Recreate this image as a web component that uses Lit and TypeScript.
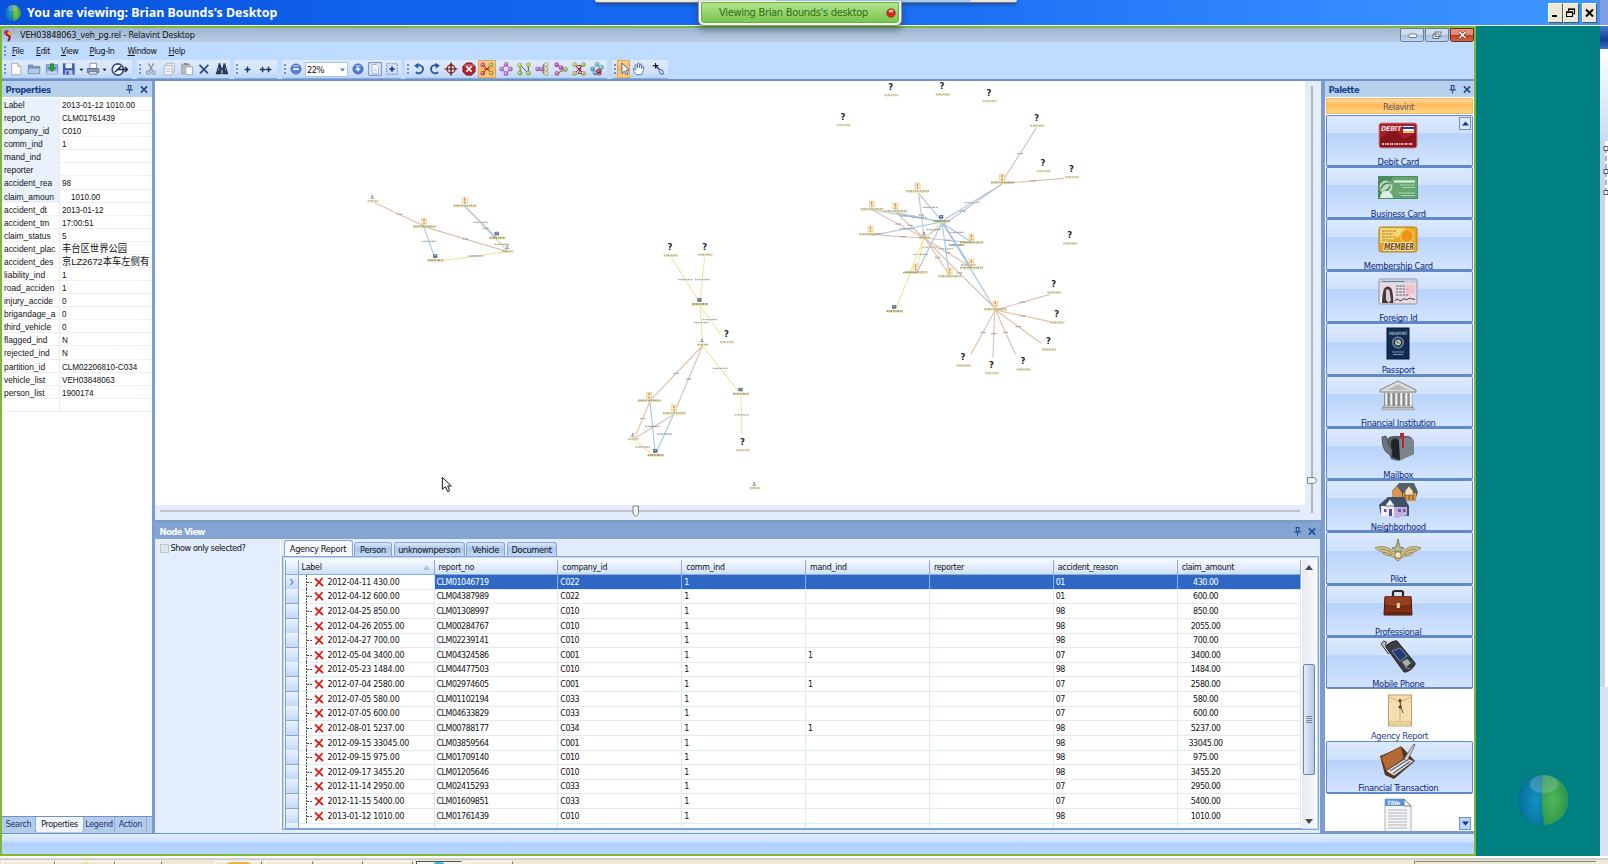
import { LitElement, html, svg, css } from "lit";
import { customElement } from "lit/decorators.js";
import { classMap } from "lit/directives/class-map.js";
import { styleMap } from "lit/directives/style-map.js";

const properties: [string, string, boolean?][] = [
  ["Label", "2013-01-12 1010.00"],
  ["report_no", "CLM01761439"],
  ["company_id", "C010"],
  ["comm_ind", "1"],
  ["mand_ind", ""],
  ["reporter", ""],
  ["accident_rea", "98"],
  ["claim_amoun", "\u00a0\u00a0\u00a0\u00a01010.00"],
  ["accident_dt", "2013-01-12"],
  ["accident_tm", "17:00:51"],
  ["claim_status", "5"],
  ["accident_plac", "丰台区世界公园", true],
  ["accident_des", "京LZ2672本车左侧有", true],
  ["liability_ind", "1"],
  ["road_acciden", "1"],
  ["injury_accide", "0"],
  ["brigandage_a", "0"],
  ["third_vehicle", "0"],
  ["flagged_ind", "N"],
  ["rejected_ind", "N"],
  ["partition_id", "CLM02206810-C034"],
  ["vehicle_list", "VEH03848063"],
  ["person_list", "1900174"],
  ["", ""],
];

const rows: string[][] = [
  ["2012-04-11 430.00", "CLM01046719", "C022", "1", "", "", "01", "430.00"],
  ["2012-04-12 600.00", "CLM04387989", "C022", "1", "", "", "01", "600.00"],
  ["2012-04-25 850.00", "CLM01308997", "C010", "1", "", "", "98", "850.00"],
  ["2012-04-26 2055.00", "CLM00284767", "C010", "1", "", "", "98", "2055.00"],
  ["2012-04-27 700.00", "CLM02239141", "C010", "1", "", "", "98", "700.00"],
  ["2012-05-04 3400.00", "CLM04324586", "C001", "1", "1", "", "07", "3400.00"],
  ["2012-05-23 1484.00", "CLM04477503", "C010", "1", "", "", "98", "1484.00"],
  ["2012-07-04 2580.00", "CLM02974605", "C001", "1", "1", "", "07", "2580.00"],
  ["2012-07-05 580.00", "CLM01102194", "C033", "1", "", "", "07", "580.00"],
  ["2012-07-05 600.00", "CLM04633829", "C033", "1", "", "", "07", "600.00"],
  ["2012-08-01 5237.00", "CLM00788177", "C034", "1", "1", "", "98", "5237.00"],
  ["2012-09-15 33045.00", "CLM03859564", "C001", "1", "", "", "98", "33045.00"],
  ["2012-09-15 975.00", "CLM01709140", "C010", "1", "", "", "98", "975.00"],
  ["2012-09-17 3455.20", "CLM01205646", "C010", "1", "", "", "98", "3455.20"],
  ["2012-11-14 2950.00", "CLM02415293", "C033", "1", "", "", "07", "2950.00"],
  ["2012-11-15 5400.00", "CLM01609851", "C033", "1", "", "", "07", "5400.00"],
  ["2013-01-12 1010.00", "CLM01761439", "C010", "1", "", "", "98", "1010.00"],
];

const columns = ["Label", "report_no", "company_id", "comm_ind", "mand_ind", "reporter", "accident_reason", "claim_amount"];

/* ---------- toolbar glyphs, all on a 16x16 grid ---------- */

const balls = (pts: [number, number, string][], lines = "", stroke = "#555") => svg`
  <path d=${lines} stroke=${stroke} fill="none" stroke-width="1.1"/>
  ${pts.map(([x, y, c]) => svg`<circle cx=${x} cy=${y} r="2.5" fill=${c} stroke="#5a4a5a" stroke-opacity=".55" stroke-width=".5"/><circle cx=${x - 0.6} cy=${y - 0.7} r=".9" fill="#fff" opacity=".75"/>`)}`;

const glyphs: Record<string, unknown> = {
  page: svg`<path d="M3 1.5h7l3.5 3.5v9.5H3z" fill="#fdfdfd" stroke="#9aa0a8" stroke-width=".9"/><path d="M10 1.5V5h3.5" fill="#d8dce2" stroke="#9aa0a8" stroke-width=".8"/>`,
  folder: svg`<path d="M1.500 3.500h5l1.200 1.500h6.800V13H1.500z" fill="#7d9cc4" stroke="#5b789f" stroke-width=".8"/><path d="M1 13.500 1.800 7h13l-.8 6.500z" fill="#b4cbe8" stroke="#6683ab" stroke-width=".7"/>`,
  inbox: svg`<path d="M1.5 3h13v10.5h-13z" fill="#8fabd0" stroke="#5d7ba5" stroke-width=".8"/><path d="M2 10.500h12v3H2z" fill="#c8d8ec"/><path d="M8 11 3.8 6.6h2.5V2h3.4v4.6h2.5z" fill="#27a339" stroke="#0e6b1f" stroke-width=".6"/>`,
  disk: svg`<path d="M1 1.500h13.500v13H1z" fill="#3c5fb2"/><path d="M4 1.500h7.500v5.500H4z" fill="#e9f0fb"/><path d="M3.500 9.500h8.500v5H3.500z" fill="#b9c9ea"/><path d="M5 10.500h2.500v4H5z" fill="#2e4fa5"/>`,
  drop: svg`<path d="M4.500 6.500h7L8 10.500z" fill="#111"/>`,
  printer: svg`<path d="M4.500 1.500h7.500v6H4.500z" fill="#fff" stroke="#66718f" stroke-width=".8"/><path d="M1.500 7.500h13v4.500h-13z" fill="#8d99b8" stroke="#4b5674" stroke-width=".8"/><path d="M3.500 11h9v3h-9z" fill="#dfe5f1" stroke="#4b5674" stroke-width=".7"/>`,
  clock: svg`<circle cx="6.400" cy="8" r="5.300" fill="#f3f7fe" stroke="#34497f" stroke-width="1.500"/><path d="M3.500 10.500 9.500 5M6 8h9.500M13 5.600 15.600 8 13 10.400" stroke="#16234a" stroke-width="1.300" fill="none"/>`,
  cut: svg`<path d="M5 1.500 9.800 10M11 1.500 6.200 10" stroke="#8d949d" stroke-width="1.600"/><circle cx="4.900" cy="12" r="2" fill="none" stroke="#8d949d" stroke-width="1.300"/><circle cx="11" cy="12" r="2" fill="none" stroke="#8d949d" stroke-width="1.300"/>`,
  copy: svg`<path d="M5 1.500h9v10H5z" fill="#eceff3" stroke="#a5acb5" stroke-width=".9"/><path d="M2.500 4h9v10.500h-9z" fill="#f6f7f9" stroke="#a5acb5" stroke-width=".9"/><path d="M4 7h6M4 9h6M4 11h6" stroke="#b9c0c8" stroke-width=".8"/>`,
  paste: svg`<path d="M2 2.500h9.500v11H2z" fill="#bcbfc4" stroke="#8b9097" stroke-width=".9"/><path d="M4.500 1.200h4.600v2.400H4.500z" fill="#868c94"/><path d="M6.500 5.500h8v9h-8z" fill="#f7f8fa" stroke="#8b9097" stroke-width=".8"/>`,
  del: svg`<path d="M2.800 3.200 12.400 13M13 3.200 3.400 13" stroke="#2c4889" stroke-width="2" fill="none"/>`,
  find: svg`<path d="M.8 14 3.800 3.500h3l.8 10.500zM15.200 14l-3-10.500h-3L8.400 14z" fill="#263550"/><path d="M6.500 6h3v3.500h-3z" fill="#3a4c74"/><path d="M3.800 1.500h2.800v2H3.800zM9.400 1.500h2.800v2H9.400z" fill="#47587d"/><path d="M3.500 10l1-3.500M12.500 10l-1-3.500" stroke="#8fa3c6" stroke-width="1"/>`,
  plus: svg`<path d="M8 4.400v7.200M4.400 8h7.200" stroke="#1b3468" stroke-width="1.900"/>`,
  plus2: svg`<path d="M4.400 4.600v6.800M1 8h6.800M11.800 4.600v6.800M8.400 8h6.800" stroke="#1b3468" stroke-width="1.800"/>`,
  zoomout: svg`<circle cx="8" cy="8" r="5.800" fill="#5c83d6" stroke="#3458a5" stroke-width=".8"/><path d="M3.800 5.200a5 4 0 0 1 8.400 0z" fill="#b5cdf4"/><path d="M4.800 8.200h6.400" stroke="#fff" stroke-width="1.800"/>`,
  zoomin: svg`<circle cx="8" cy="8" r="5.800" fill="#4f7cd6" stroke="#2f55a5" stroke-width=".8"/><path d="M3.800 5.200a5 4 0 0 1 8.400 0z" fill="#b5cdf4"/><path d="M5.500 8.200h5M8 5.700v5" stroke="#fff" stroke-width="1.800"/>`,
  fitpage: svg`<path d="M.8.8h14.400v14.400H.8z" fill="#e4ecfb" stroke="#5873b3" stroke-width="1"/><path d="M4.500 3h5l2.500 2.500V13H4.500z" fill="#fff" stroke="#8292b5" stroke-width=".8"/><path d="M6 8h4M6 10h4" stroke="#9fb0d2" stroke-width=".8"/>`,
  fitsel: svg`<path d="M2 2h12v12H2z" fill="none" stroke="#5570a8" stroke-width="1.100" stroke-dasharray="1.700 1.500"/><path d="M8 5v6M5 8h6" stroke="#1f3c86" stroke-width="2"/>`,
  undo: svg`<path d="M5 3.800c5.200-1.400 8.600 1.900 7.400 5.600-1.100 3.400-5.300 4.500-8 2.300" fill="none" stroke="#2b55a8" stroke-width="2"/><path d="M7.400.8 2.400 4.300l4.900 3.400z" fill="#2b55a8"/>`,
  redo: svg`<path d="M11 3.800C5.800 2.400 2.400 5.700 3.600 9.400c1.100 3.400 5.300 4.500 8 2.300" fill="none" stroke="#2b55a8" stroke-width="2"/><path d="M8.600.8l5 3.500-4.900 3.400z" fill="#2b55a8"/>`,
  target: svg`<circle cx="8" cy="8" r="4.600" fill="#f7dcdc" stroke="#a32222" stroke-width="1.500"/><path d="M8 .6v14.800M.6 8h14.800" stroke="#3c0d0d" stroke-width="1.400"/>`,
  stop: svg`<path d="M5 1h6l4 4v6l-4 4H5l-4-4V5z" fill="#b3202a" stroke="#6f0d14" stroke-width=".8"/><path d="M4 2.500h8l2 2.500H2z" fill="#d88a90" opacity=".6"/><path d="m5 5 6 6m0-6-6 6" stroke="#fff" stroke-width="1.900"/>`,
  lay1: balls([[3.2, 3.2, "#c64a9a"], [12.8, 3.2, "#8fc43c"], [3.2, 12.8, "#c9504a"], [12.8, 12.8, "#c9a23a"]], "M3 3 13 13M13 3 3 13M5 8h6", "#8a2a2a"),
  lay2: balls([[8, 2.8, "#c266c9"], [2.9, 8, "#c266c9"], [13.1, 8, "#c266c9"], [8, 13.2, "#c266c9"]], "M8 3 3 8l5 5 5-5z", "#9050a0"),
  lay3: balls([[3, 3.4, "#c8d04a"], [13, 3, "#b8cf48"], [3.4, 12.6, "#8cbf48"], [13, 12.8, "#9fc644"]], "M3 3l10 10V3M3 3l1 9", "#55603a"),
  lay4: balls([[3, 8, "#c45cc0"], [7.5, 8, "#a070c8"], [12.8, 3, "#d6cf9a"], [12.8, 8, "#d6cf9a"], [12.8, 13, "#d6cf9a"]], "M3 8h5M9.500 3v10M9.500 3h4M9.500 8h4M9.500 13h4", "#6a6a50"),
  lay5: balls([[3, 3.2, "#c24bb0"], [8, 6.5, "#c24bb0"], [13, 8.5, "#92c244"], [3.4, 13, "#d05a86"]], "M3 3l5 3.500 5 2M13 8.500 3.400 13", "#69485d"),
  lay6: balls([[3, 3, "#b9c94a"], [13, 3, "#9cc440"], [3, 13, "#b9b94a"], [13, 13, "#c9a848"]], "M3 3l10 10M13 3 3 13M4.500 5l7 7M6 4h4v4l-3 5h5", "#a01a2c"),
  lay7: balls([[8, 2.8, "#5fc0c4"], [3, 8, "#5f90c4"], [13, 6, "#5fc0c4"], [6, 12.5, "#58a0b8"], [10.5, 11, "#a81c30"]], "M13.500 9.500A3.500 3.500 0 1 0 13.500 13", "#a81c30"),
  pointer: svg`<path d="M4.500 1v12l2.900-2.600 1.900 4.300 2-.9-1.900-4.200h3.800z" fill="#eef3ff" stroke="#44598f" stroke-width="1"/>`,
  hand: svg`<path d="M5 14.500C3 12.500 1.600 9.500 1.200 7.800c.8-1 2-.2 2.700 1.400L3.400 3.600c.8-1.200 1.800-.6 2.200.6l.5 2.600.2-5c.8-1 1.800-.8 2 .2l.3 4.600 1-4c.9-.9 1.900-.5 1.800.7l-.6 4.400 1.500-2.300c1-.5 1.500.2 1.200 1.200-.9 2.700-1 5.600-2.700 7.900z" fill="#fff" stroke="#3f5590" stroke-width=".9"/>`,
  link: svg`<path d="M2 4.200h6.500M5.200 1v6.500" stroke="#111a33" stroke-width="1.300"/><path d="m5 4 5 5" stroke="#111a33" stroke-width="1.300"/><path d="M9.500 9c2-1.500 5 1 4.500 4.500-2.500 1.500-5-1-4.500-4.500z" fill="#dbe6fa" stroke="#4a6bb0" stroke-width="1.200"/>`,
};

const icon = (name: string, size = 14) => html`<svg width=${size} height=${size} viewBox="0 0 16 16">${glyphs[name]}</svg>`;

/* cell: [name, cell width, highlighted] */
type Cell = [string, number, boolean?];
const toolbars: Cell[][] = [
  [["page", 18], ["folder", 18], ["inbox", 18], ["disk", 16], ["drop", 8], ["printer", 15], ["drop", 8], ["clock", 22]],
  [["cut", 18], ["copy", 18], ["paste", 18], ["del", 17], ["find", 18]],
  [["plus", 17], ["plus2", 19]],
  [["zoomout", 18], ["combo", 44], ["zoomin", 18], ["fitpage", 17], ["fitsel", 17]],
  [["undo", 17], ["redo", 15], ["target", 18], ["stop", 18], ["lay1", 18, true], ["lay2", 19], ["lay3", 18], ["lay4", 18], ["lay5", 19], ["lay6", 18], ["lay7", 18]],
  [["pointer", 13, true], ["hand", 19], ["link", 18]],
];
const toolbarWidths = [130, 93, 43, 119, 202, 56];

/* ---------- palette pictures, 52x36 ---------- */

const pictures: Record<string, unknown> = {
  debit: svg`<rect x="7" y="6" width="38" height="25" rx="2.500" fill="#a81f2b" stroke="#c98a8e"/><path d="M8 22 22 10l10 12 12-6v14H8z" fill="#7d1019" opacity=".7"/><text x="9" y="14" font-size="7" font-weight="700" font-style="italic" fill="#f7d9db" textLength="20" lengthAdjust="spacingAndGlyphs">DEBIT</text><path d="M31 9h11v7H31z" fill="#fff"/><path d="M31 10h11v2H31z" fill="#2436a0"/><path d="M31 14h11v1.500H31z" fill="#e2b32a"/><path d="M10 27h31" stroke="#f0c6c8" stroke-width="1.800" stroke-dasharray="2 1 1 .7"/>`,
  business: svg`<rect x="6.500" y="7.500" width="39" height="22" fill="#66a673" stroke="#4f8a5d"/><path d="M7 8h14L9 29H7z" fill="#4b8d5a"/><circle cx="14" cy="18" r="6.500" fill="#b9dcbe"/><path d="M9 20c2-6 6-7 10-5M11 23c4-1 6-3 7-6" stroke="#4b8d5a" stroke-width="1.600" fill="none"/><path d="M8 29c1-6 3-7 6-7s6 2 7 7z" fill="#dff0e0"/><path d="M22 12.500h21" stroke="#e9f6ea" stroke-width="2"/><path d="M28 16h15M30 18.500h13M26 24h17M29 26.500h14" stroke="#a9d4ae" stroke-width="1"/>`,
  member: svg`<rect x="7" y="6" width="38" height="25" rx="2.500" fill="#e9a71c" stroke="#a8862f"/><path d="M8 7h25c-2 8-12 13-25 15z" fill="#f6d873"/><circle cx="35" cy="15" r="6.500" fill="#f0901a" stroke="#f7c44a" stroke-width="1.500"/><path d="M10 10h14M10 13h12M10 16h14M10 19h9" stroke="#a5721a" stroke-width=".9" stroke-dasharray="3 .7"/><text x="12" y="29" font-size="8" font-weight="700" font-style="italic" fill="#7a4a08" textLength="30" lengthAdjust="spacingAndGlyphs" stroke="#fff8e0" stroke-width="1.400" paint-order="stroke">MEMBER</text>`,
  id: svg`<rect x="7" y="6" width="38" height="25" rx="1.500" fill="#ead9e0" stroke="#8f97a6"/><path d="M8 7h36v3H8z" fill="#c2d3e6"/><path d="M10 8.500h22" stroke="#5f7fa8"/><path d="M8 24h13v6H8z" fill="#f3f3f5"/><path d="M10 30c0-5 1-12 2-14 1.500-3.500 6-3.500 7.500 0 1.500 3 1.500 9 2 14z" fill="#3d3a40"/><path d="M14 17c2-2 4 0 4 4l1 6-2 3-3-3z" fill="#d9cdd0"/><path d="M24 13h9M24 16h12M24 19h10M24 22h13" stroke="#4d525c" stroke-width=".9" stroke-dasharray="2.500 .8"/><path d="M34 12h9v9h-9z" fill="#f2bcc4" opacity=".8"/><path d="M23 28c3-5 4 2 7-1s4 1 6-1 4 1 7 0" stroke="#222" fill="none" stroke-width=".9"/>`,
  passport: svg`<rect x="15" y="3" width="22" height="31" fill="#122c50" stroke="#0a1b36"/><text x="17" y="9.500" font-size="4.500" font-weight="700" fill="#8fa6c4" textLength="18" lengthAdjust="spacingAndGlyphs">PASSPORT</text><circle cx="26" cy="17.500" r="5.200" fill="none" stroke="#8ea3bd" stroke-width="1.600" stroke-dasharray="1.500 .6"/><circle cx="26" cy="17.500" r="3" fill="#c9c49a"/><path d="M24.500 16 27 18.500" stroke="#122c50"/><path d="M20 27h12M21 29.500h10" stroke="#7d93b0" stroke-width="1"/>`,
  bank: svg`<path d="M8 12 26 3l18 9v2H8z" fill="#dcdcda" stroke="#77787a" stroke-width=".9"/><path d="M15 12 26 6.500 37 12z" fill="#b7b8b8"/><path d="M12 15h28v13H12z" fill="#8b8d90"/>${[13, 18, 23, 28, 33, 37.5].map((x) => svg`<path d=${`M${x} 14.500h2.600v14H${x}z`} fill="#f3f3f0" stroke="#8d8e90" stroke-width=".5"/>`)}<path d="M11 28h30v1.600H11zM10 30h32v1.800H10z" fill="#e8e8e5" stroke="#777" stroke-width=".6"/>`,
  mailbox: svg`<path d="M13 12c2-5 6-6 10-6h13c4 1 6 4 6 8v10l-16 7-7-2z" fill="#585e66"/><path d="M26 10c7-4 14-3 16 2v12l-15 7z" fill="#7c838b"/><path d="M19 13c0-5 6-6 8-2l1 19-8-3z" fill="#1f2226"/><path d="m10 7 4-1c1 6 3 10 6 14v6l-6-4c-3-4-4-9-4-15z" fill="#6d747b" stroke="#44484d" stroke-width=".8"/><path d="M28 3h4v15h-2V7h-2z" fill="#b82536"/>`,
  houses: svg`<path d="M20 9 27 1h15l4 9-3 9H26z" fill="#54616a"/><path d="M20 10l5-6 5 7v7H20zM31 11h13v8H31z" fill="#d9954d"/><path d="M33 9l4-5 4 5v4h-8z" fill="#f3e2bd" stroke="#7d5e38" stroke-width=".6"/><path d="M33 13v5M37 13v5M41 13v5" stroke="#6b4624"/><path d="M7 23 16 15h16l5 9v10H9z" fill="#3f5168"/><path d="M9 24h13v10H9z" fill="#f3effa"/><path d="M22 25h13v8l-9 3h-4z" fill="#c4aee0"/><path d="m13 24 5-7 5 7z" fill="#f7f5fb" stroke="#44506a" stroke-width=".8"/><path d="M17 27h3v7h-3z" fill="#4848a8"/><path d="M12 27h2.500v3H12zM26 27h3v3h-3zM31 27h2.500v3H31z" fill="#6a5a9a"/>`,
  wings: svg`<path d="M3 14c7-3 14-1 19 4l4-3 4 3c5-5 12-7 19-4-4 3-6 3-8 5-3 3-6 3-9 3l-6 5-6-5c-3 0-6 0-9-3-2-2-4-2-8-5z" fill="#d2c48e" stroke="#8b7a42" stroke-width=".8"/><path d="M8 15c6 0 10 2 13 5M44 15c-6 0-10 2-13 5M11 18c4 1 6 2 9 3M41 18c-4 1-6 2-9 3" stroke="#7c6a35" stroke-width=".8" fill="none"/><path d="M26 5l2 8 4 1-4 3-2 5-2-5-4-3 4-1z" fill="#b9b888" stroke="#5f6240" stroke-width=".7"/><circle cx="26" cy="21" r="3.400" fill="#efe8c4" stroke="#7c6a35"/>`,
  brief: svg`<path d="M21 9V5.500c0-1 .8-1.500 2-1.500h6c1.200 0 2 .5 2 1.500V9" fill="none" stroke="#322524" stroke-width="2.200"/><path d="M13 10h26l1 18H12z" fill="#7e2f16" stroke="#45180b"/><path d="M13 9.500h26v8.500l-13 2-13-2z" fill="#96401f" stroke="#5b210e" stroke-width=".7"/><path d="M24.800 16h3v5h-3z" fill="#e8d6b8"/><path d="M14 26h24" stroke="#4e1c0d"/>`,
  phone: svg`<path d="m9 5 2.500-3 3 1-1 3 5 7-2 2z" fill="#b8bcc0" stroke="#3b3e42"/><path d="M14 8c-1-2 8-7 11-6l18 22c1 3-7 10-11 9z" fill="#3b3f44" stroke="#1b1d20"/><path d="m20 12 8-3 7 8-7 5z" fill="#233a7a" stroke="#95a0b5" stroke-width=".8"/><path d="m30 23 5-3 4 4-5 4z" fill="#a5b0ae"/><path d="m33 28 5 2" stroke="#8a9094"/>`,
  envelope: svg`<rect x="14.500" y="4" width="23" height="31" fill="#f6deb0" stroke="#c0a06a"/><path d="M15 6l11 5 11-5M26 11v20M15 31h22" stroke="#c6a56c" fill="none" stroke-width=".8"/><path d="M15 31h22v3.500H15z" fill="#ecd09a"/><circle cx="26" cy="9.500" r="1.500" fill="#5b3f20"/><circle cx="26" cy="16" r="1.500" fill="#5b3f20"/><path d="m26 10 1 6 2 6" stroke="#3d2c18" stroke-width=".8" fill="none"/>`,
  wallet: svg`<path d="M8 13 30 4l13 14-21 18-9-4z" fill="#4f3320"/><path d="M9 14 29 3.500l3 12L14 28z" fill="#b36a34" stroke="#6d3d1b" stroke-width=".8"/><path d="M14 28 34 15l8 3-20 15z" fill="#e6e6e2" stroke="#4c4433" stroke-width=".8"/><path d="m18 28 18-11.500M21 30.500l17-12" stroke="#57627a" stroke-width="1.200"/><path d="M32 16 41 2l2-1-1 3-7 14z" fill="#cfd2d8" stroke="#4a4a50" stroke-width=".7"/>`,
  doc: svg`<path d="M13 3h19l7 7v30H13z" fill="#f4f6f8" stroke="#a9b3be"/><path d="M13 3h19v7H13z" fill="#5b95d6"/><text x="15" y="9" font-size="6" font-weight="700" font-style="italic" fill="#eaf3ff" textLength="13" lengthAdjust="spacingAndGlyphs">Title</text><path d="M32 3v7h7z" fill="#fff" stroke="#55657a" stroke-width=".8"/><path d="M16 14h19M16 17h19M16 20h19M16 23h19M16 26h19M16 29h19M16 32h19" stroke="#a6aab0" stroke-width=".9"/>`,
};

const paletteItems: [string, string, boolean?][] = [
  ["debit", "Debit Card"],
  ["business", "Business Card"],
  ["member", "Membership Card"],
  ["id", "Foreign Id"],
  ["passport", "Passport"],
  ["bank", "Financial Institution"],
  ["mailbox", "Mailbox"],
  ["houses", "Neighborhood"],
  ["wings", "Pilot"],
  ["brief", "Professional"],
  ["phone", "Mobile Phone"],
  ["envelope", "Agency Report", true],
  ["wallet", "Financial Transaction"],
  ["doc", "", true],
];

/* ---------- graph data; units are thirds of a pixel ---------- */

type Node = [kind: string, x: number, y: number];
type Edge = [x1: number, y1: number, x2: number, y2: number, color: string];
const T = "#dcc2ae";
const B = "#a6c8e8";
const Y = "#efe6a8";
const G = "#c3c4cc";

const rightNodes: Node[] = [
  ["q", 212, 20], ["q", 366, 18], ["q", 507, 38], ["q", 69, 110], ["q", 650, 112], ["q", 669, 248], ["q", 754, 266],
  ["q", 749, 465], ["q", 701, 612], ["q", 710, 702], ["q", 685, 783], ["q", 429, 831], ["q", 514, 854], ["q", 609, 843],
  ["r", 546, 292], ["r", 292, 318], ["r", 155, 372], ["r", 226, 378], ["r", 151, 447], ["r", 454, 472], ["r", 454, 548],
  ["r", 287, 561], ["r", 388, 573], ["r", 526, 672], ["v", 363, 411], ["p", 312, 461], ["v", 222, 681],
];
const rightEdges: Edge[] = [
  [650, 142, 550, 300, T], [548, 310, 732, 295, T], [366, 424, 546, 312, B], [312, 474, 546, 312, G],
  [296, 340, 366, 424, B], [296, 340, 312, 470, T], [157, 390, 366, 426, B], [157, 390, 312, 474, T],
  [228, 398, 366, 426, B], [228, 398, 312, 474, T], [155, 466, 366, 426, B], [185, 466, 312, 474, T],
  [366, 428, 454, 486, B], [312, 474, 454, 488, G], [366, 428, 450, 562, B], [369, 428, 453, 562, B], [312, 474, 454, 562, T],
  [366, 428, 292, 575, B], [312, 474, 290, 572, Y], [366, 428, 388, 585, B], [318, 480, 388, 585, T],
  [312, 474, 524, 684, T], [370, 430, 520, 680, B], [366, 426, 316, 472, Y], [312, 474, 230, 682, Y],
  [526, 690, 690, 643, T], [526, 690, 690, 725, T], [526, 690, 664, 790, T], [526, 690, 452, 824, T], [524, 690, 519, 832, T], [526, 690, 587, 824, T],
];
const leftNodes: Node[] = [
  ["p", 67, 51], ["r", 222, 124], ["r", 344, 62], ["v", 440, 161], ["p", 472, 202], ["v", 255, 229],
  ["q", 960, 201], ["q", 1064, 199], ["v", 1048, 360], ["q", 1129, 461], ["p", 1056, 482], ["r", 897, 646], ["r", 972, 684],
  ["p", 848, 765], ["v", 915, 813], ["v", 1171, 629], ["q", 1177, 785], ["p", 1213, 912],
];
const leftEdges: Edge[] = [
  [74, 68, 222, 138, T], [222, 140, 470, 214, T], [222, 142, 252, 226, B], [285, 241, 470, 215, Y],
  [346, 80, 440, 174, B], [346, 80, 470, 210, G], [440, 178, 470, 208, Y],
  [964, 232, 1048, 366, Y], [1064, 232, 1050, 366, Y], [1050, 376, 1057, 480, Y], [1050, 376, 1110, 462, Y],
  [1057, 498, 900, 662, T], [1057, 498, 974, 696, T], [1057, 498, 1164, 632, Y], [1173, 645, 1176, 764, Y],
  [900, 664, 856, 768, T], [900, 664, 915, 814, B], [970, 704, 852, 776, T], [970, 704, 918, 820, B], [852, 780, 905, 822, Y],
];

const smear = (x: number, y: number, w: number, c = "#8d8648", h = 5) => svg`
  <path d=${`M${x - w / 2} ${y}H${x + w / 2}`} stroke=${c} stroke-width=${h} stroke-dasharray="5 1.500 3 1 7 2" opacity=".75"/>`;

const drawNode = ([kind, x, y]: Node) => {
  if (kind === "q")
    return svg`<text x=${x} y=${y + 10} class="q">?</text>${smear(x + 2, y + 25, 42, "#a39668")}<path d=${`M${x - 18} ${y + 28}h42`} stroke="#e4dca0" stroke-width="2"/>`;
  if (kind === "r")
    return svg`<rect x=${x - 7} y=${y - 9} width="15" height="18" fill="#fdecc8" stroke="#efc88a" stroke-width="2"/><path d=${`M${x} ${y - 7}v8M${x - 2} ${y + 6}h5`} stroke="#b5713f" stroke-width="3"/>${smear(x + 1, y + 15, 68)}<path d=${`M${x - 33} ${y + 19}h68`} stroke="#e6db8c" stroke-width="2"/>`;
  if (kind === "v")
    return svg`<rect x=${x - 6} y=${y - 6} width="13" height="11" rx="2" fill="#5a6d8a"/><path d=${`M${x - 3} ${y - 2}h7`} stroke="#c4d4e8" stroke-width="2.500"/>${smear(x + 2, y + 12, 48, "#85803c", 6)}<path d=${`M${x - 22} ${y + 16}h48`} stroke="#e6e088" stroke-width="2"/>`;
  return svg`<circle cx=${x} cy=${y - 3} r="3" fill="#8b8f98"/><path d=${`M${x - 7} ${y + 5}c2-6 12-6 14 0z`} fill="#9a9ea6"/>${smear(x + 2, y + 12, 32, "#99904e", 5)}<path d=${`M${x - 14} ${y + 15}h32`} stroke="#e6e088" stroke-width="2"/>`;
};

const drawEdge = ([x1, y1, x2, y2, c]: Edge) => {
  const w = c === T ? 16 : c === G ? 20 : 44;
  return svg`<path d=${`M${x1} ${y1}L${x2} ${y2}`} stroke=${c} stroke-width="3.400"/>${smear((x1 + x2) / 2, (y1 + y2) / 2, w, "#8d8f94", 4)}`;
};

const pin = svg`<path d="M4.500 2h5M5.500 2v5M8.800 2v5M3 7.500h8.200M7 7.500V12" stroke-width="1.400" fill="none" stroke="currentColor"/>`;
const cross = svg`<path d="M2.500 3 10.500 11M10.500 3l-8 8" stroke="currentColor" stroke-width="2.200"/>`;
const captionIcons = () => html`<svg class="cap-ic" width="11" height="11" viewBox="0 0 14 14">${pin}</svg><svg class="cap-ic" width="10" height="11" viewBox="0 0 13 14">${cross}</svg>`;

@customElement("app-root")
export class AppRoot extends LitElement {
  static styles = css`
    :host { display: block; width: 1608px; height: 864px; overflow: hidden; position: relative; background: #ece9d8; font: 8.8px/13px "DejaVu Sans Condensed", "DejaVu Sans", sans-serif; font-stretch: condensed; letter-spacing: -0.33px; color: #111; white-space: nowrap; }
    * { box-sizing: border-box; }
    svg { display: block; flex: none; }
    .page { display: flex; flex-direction: column; height: 864px; }

    .viewer { display: flex; height: 26px; border-bottom: 1px solid #fff; background: linear-gradient(90deg, #0852dc 0, #1062ec 25%, #1c70f4 60%, #338aff 83%, #3d97ff 100%); align-items: center; color: #fff; padding-left: 5px; flex: none; }
    .viewer h1 { margin: 0 0 0 6px; font: bold 12.4px/16px "Noto Sans", "DejaVu Sans Condensed", sans-serif; letter-spacing: 0; flex: 1; }
    .wbtn { width: 15.5px; height: 20px; background: #ece9d8; border: 1px solid; border-color: #fff #555 #555 #fff; display: grid; place-items: center; }
    .wbtn.last { margin: 0 3px 0 3px; }
    .edge-top { width: 8px; height: 25px; background: #7e9ee4; }

    .overlay { position: absolute; left: 595px; top: 0; width: 422px; display: flex; flex-direction: column; align-items: center; }
    .plate { width: 422px; height: 3px; background: linear-gradient(90deg, #ece9dc 43%, #a9cdf0 43%, #a9cdf0 89%, #ece9dc 89%); box-shadow: 0 2px 3px #1236; border-bottom: 1px solid #777; border-radius: 0 0 3px 3px; flex: none; }
    .tab-green { margin-left: -12px; width: 204px; height: 25px; margin-top: -2px; background: #f2f6ee; border-radius: 0 0 6px 6px; padding: 1px 2px 2px; box-shadow: 0 3px 6px 1px #2347; border: solid #8a9a86; border-width: 0 1px 1px; }
    .tab-green div { height: 21px; border-radius: 0 0 3px 3px; border: 1px solid #6bb043; background: linear-gradient(#b2e48c, #7bc552); display: flex; align-items: center; padding: 0 0 0 17px; color: #2f7014; font-size: 11px; letter-spacing: -0.31px; gap: 18px; }

    .middle { display: flex; height: 830px; flex: none; }
    .app { width: 1476px; border: 2px solid #7cba34; display: flex; flex-direction: column; background: #bfdbff; }
    .title { height: 14px; flex: none; background: linear-gradient(#9db5cf, #b9cde6); display: flex; align-items: center; padding-left: 1px; }
    .title span { flex: 1; padding-left: 7px; font-size: 9.1px; letter-spacing: -0.2px; }
    .tb { height: 13.5px; width: 24px; margin-right: 1px; border: 1px solid #6a7f9c; border-radius: 0 0 3px 3px; background: linear-gradient(#cfdcee 45%, #a8bfdc 50%, #c3d6ee); display: grid; place-items: center; }
    .tb.x { background: linear-gradient(#e2907c 45%, #c23c24 50%, #d2644a); border-color: #6e2c22; margin-right: 0; }
    .menu { height: 18px; flex: none; display: flex; align-items: center; padding-left: 2px; }
    .grip { width: 2px; height: 11px; background: repeating-linear-gradient(#6f8fc0 0 2px, transparent 2px 4px); flex: none; }
    .menu .grip { margin-right: 6px; }
    .bars { height: 19px; flex: none; display: flex; gap: 4.5px; }
    .bar { height: 19px; display: flex; align-items: center; background: linear-gradient(#dfebfc, #d2e3fb 60%, #bcd5f6); border-bottom: 1px solid #86a8da; padding-left: 2px; }
    .bar .grip { margin-right: 1px; }
    .cell { height: 18px; display: grid; place-items: center; flex: none; overflow: hidden; }
    .cell.on { background: linear-gradient(#fcd08e, #fbb75c 50%, #fdcf80); border: 1px solid #e5a654; }
    .combo { width: 43px; height: 15px; background: #fff; border: 1px solid #a9c3e8; display: flex; align-items: center; justify-content: space-between; padding-left: 1px; font-size: 9.3px; letter-spacing: -0.6px; }

    .work { flex: 1; min-height: 0; display: flex; border-top: 2px solid #6f92c8; background: #7b9ccf; }
    .caption { height: 16px; flex: none; display: flex; align-items: center; background: #b9d0ec; color: #17428c; font-weight: bold; font-size: 9.400px; letter-spacing: -0.480px; padding: 0 3px 0 3.500px; gap: 4px; }
    .caption span { flex: 1; }
    .cap-ic { color: #1f4a94; }
    .props { width: 150px; display: flex; flex-direction: column; background: #fff; margin-right: 3px; flex: none; }
    .prop-list { flex: 1; padding-top: 1px; font: 9.9px/13px "Liberation Sans", "Noto Sans CJK SC", sans-serif; font-stretch: normal; letter-spacing: 0; }
    .prop { height: 13.09px; display: grid; grid-template-columns: 57.5px 1fr; }
    .prop > * { border-bottom: 1px solid #edf0f5; overflow: hidden; }
    .prop span { display: block; width: max-content; transform-origin: 0 50%; transform: scaleX(0.85); margin-right: -20px; }
    .prop .v span { transform: scaleX(0.82); }
    .prop .v.cjk span { transform: scaleX(0.94); }
    .prop .k { padding-left: 2px; border-right: 1px solid #e6eaf2; }
    .prop.hl .k { background: #e9f1fc; }
    .prop .v { padding-left: 2px; }
    .side-tabs { height: 17px; flex: none; background: #b4cbea; border-top: 1px solid #6f92c8; display: flex; color: #17307a; letter-spacing: -0.25px; }
    .side-tabs span { height: 15px; display: grid; place-items: center; border-right: 1px solid #8fabd6; }
    .side-tabs .on { background: #f2f7ff; color: #111; border-radius: 0 0 3px 3px; letter-spacing: -0.33px; }

    .center { width: 1166px; display: flex; flex-direction: column; flex: none; margin-right: 4px; }
    .canvas-area { height: 439px; flex: none; display: grid; grid-template: 424px 15px / 1150px 16px; background: #e3edfc; }
    .canvas { background: #fff; display: block; }
    .q { font: bold 28px "DejaVu Sans Condensed", sans-serif; text-anchor: middle; fill: #20242c; letter-spacing: 0; }
    .node-view { flex: 1; margin-top: 3px; display: flex; flex-direction: column; min-height: 0; background: #e2edfd; border-radius: 3px 3px 0 0; overflow: hidden; margin-right: 1px; }
    .node-view .caption { background: #84a4d2; color: #fff; height: 16px; letter-spacing: -0.55px; padding-left: 4.5px; }
    .node-body { flex: 1; display: flex; min-height: 0; }
    .filter { width: 125.5px; padding: 3px 0 0 5px; display: flex; align-items: flex-start; gap: 2px; border-right: 1px solid #fff; background: #e2edfd; font-size: 9.1px; letter-spacing: -0.45px; }
    .box { width: 8.5px; height: 9px; margin-top: 2px; border: 1px solid #b9c6d8; background: #dfe4ea; }
    .tabs { font-size: 9.2px; }
    .grid-side { flex: 1; display: flex; flex-direction: column; padding: 2px 1px 3px 1px; min-width: 0; }
    .tabs { display: flex; height: 15px; gap: 1.5px; align-items: flex-end; padding-left: 2px; flex: none; }
    .tabs span { height: 14px; border: 1px solid #86a6d6; border-bottom: 0; border-radius: 3px 3px 0 0; background: linear-gradient(#dbe8fb, #a9c5ec 45%, #c4dafa); display: grid; place-items: center; }
    .tabs .on { height: 16px; background: #f5f9ff; }
    .frame { flex: 1; min-height: 0; border: 1px solid #86a6d6; padding: 3px 2px 0; display: flex; background: #f2f7ff; box-shadow: inset 0 0 0 1px #c3d8f8; }
    .table { flex: none; width: 1017px; overflow: hidden; background: #fff; border: solid #7f9fd2; border-width: 0 0 1px 1px; letter-spacing: -0.45px; display: flex; flex-direction: column; }
    .tr { height: 14.64px; flex: none; display: grid; grid-template-columns: 13px 136px repeat(7, 1fr); }
    .tr > * { border-right: 1px solid #dbe8f8; border-bottom: 1px solid #e1ebf8; padding-left: 2px; line-height: 14px; }
    .tr.head > * { background: linear-gradient(#f5f9ff, #dfeafa 60%, #cddff7); border-right: 1px solid #8aabdc; border-bottom: 1px solid #8aabdc; padding-left: 4px; letter-spacing: -0.28px; }
    .tr.head > .lab { display: flex; justify-content: space-between; align-items: center; padding-right: 4px; }
    .tr > .sel { background: linear-gradient(#eaf2fe, #c4d9f6); border-color: #86a6d6; padding: 0; display: grid; place-items: center; }
    .tr .lab { display: flex; align-items: center; padding-left: 3px; letter-spacing: -0.25px; }
    .tr .lab svg { margin-right: 2px; }
    .tr.head .lab svg { margin: 0; }
    .tr > .num { display: block; padding-right: 67px; text-align: center; padding-left: 0; }
    .tr.head > .num { text-align: left; padding: 0 0 0 4px; }
    .tr.cur > .d { background: #2f68c4; color: #fff; border-right-color: #8db0ea; }
    .scroll { width: 15px; background: linear-gradient(90deg, #e6e9ef, #fbfbfc); display: flex; flex-direction: column; align-items: center; margin-bottom: 1px; flex: none; }
    .scroll .up { height: 14px; display: grid; place-items: center; }
    .thumb { margin-top: 90px; width: 12px; height: 111px; border: 1px solid #6d86ab; border-radius: 2px; background: linear-gradient(90deg, #e6eef9, #b5c8e2); display: grid; place-items: center; }
    .scroll .down { margin-top: 39px; height: 14px; display: grid; place-items: center; }

    .palette { flex: 1; display: flex; flex-direction: column; min-width: 0; position: relative; background: #fff; margin: 0 0 2px; }
    .palette .caption { padding-right: 2.5px; }
    .cat { height: 16px; margin: 1px 1px 0.5px; background: linear-gradient(#ffd9a0, #ffb956 45%, #ffd58c); border: 1px solid #f0b75e; display: grid; place-items: center; color: #5b5866; flex: none; font-size: 9.2px; padding-right: 2px; }
    .items { flex: 1; min-height: 0; overflow: hidden; color: #0a1f80; font-size: 9.3px; }
    .item { height: 52.24px; border: solid #6189c8; border-width: 1px 1.5px 2px 1.5px; border-radius: 2px; background: linear-gradient(#dce9fd 0, #cfe1fc 35%, #b8d3fa 36%, #d3e4fd 100%); display: flex; flex-direction: column; align-items: center; margin: 0 1px; padding-right: 2.5px; }
    .item.flat { background: #fff; border-color: transparent; color: #1f3a8c; }
    .item:nth-child(12) { padding-right: 0; }
    .item svg { margin-top: 1px; height: 38px; overflow: visible; }
    .item span { line-height: 13px; }
    .more { position: absolute; right: 3px; width: 12px; height: 13px; border: 1px solid #6e92cc; background: #dbe8fc; display: grid; place-items: center; }
    .more.up { top: 36px; }
    .more.dn { bottom: 1px; background: #bcd6fa; }

    .status { height: 21px; flex: none; border-top: 1px solid #6f92c8; background: linear-gradient(#e3eefe 0, #cadffd 40%, #b0d0ff 45%, #b8d6ff 100%); }
    .desk { width: 124px; background: #008080; }
    .edge { width: 8px; display: flex; flex-direction: column; background: #ccd6e8; }
    .edge .e1 { height: 23px; background: linear-gradient(#4379c8, #123f90 60%, #3c74c4); }
    .edge .e2 { height: 92px; background: linear-gradient(#fff, #c9dbf2); }
    .edge .e3 { height: 546px; background: linear-gradient(90deg, #ccd5e8 5px, #fff 5px); padding-top: 4px; }
    .edge .e4 { flex: 1; background: #d7e1f2; }
    .globe { position: absolute; left: 1519px; top: 775px; }
    .taskbar { flex: 1; background: #ece9d8; border-top: 2px solid #fff; box-shadow: inset 0 2px #d4d0c8; display: flex; padding: 3px 11px 0 2px; }
    .task { height: 8px; border: 1px solid; border-color: #fff #77746a #77746a #fff; display: flex; justify-content: center; }
    .task.on { border-color: #555 #fff #fff #555; background: #f6f5ee; }
    .task i { height: 4px; align-self: flex-start; border-radius: 5px 5px 0 0; }
    .task.tray { background: #ece9d8; border-color: #8d8a80 #fff #fff #8d8a80; }
    .sp { flex: 1; }
  `;

  private task(w: number, gap: number, color = "", iw = 0, on = false, tray = false) {
    return html`<div class=${classMap({ task: true, on, tray })} style=${styleMap({ width: `${w}px`, marginLeft: `${gap}px` })}>
      ${color ? html`<i style=${styleMap({ width: `${iw}px`, background: color })}></i>` : ""}</div>`;
  }

  private globe(size: number, opacity: number) {
    return html`<svg width=${size} height=${size} viewBox="0 0 50 50" opacity=${opacity}>
      <defs>
        <radialGradient id="gb" cx=".7" cy=".5" r=".7"><stop offset="0" stop-color="#1a9bdc"/><stop offset="1" stop-color="#0d62a4"/></radialGradient>
        <radialGradient id="gg" cx=".4" cy=".5" r=".8"><stop offset="0" stop-color="#74cf44"/><stop offset="1" stop-color="#2f8a3a"/></radialGradient>
      </defs>
      <path d="M24 0a25 25 0 0 0 0 50q-3-25 0-50z" fill="url(#gb)"/>
      <path d="M24 0a25 25 0 1 1 1 50q-4-25-1-50z" fill="url(#gg)"/>
      <ellipse cx="25" cy="9" rx="14.500" ry="9" fill="#fff" opacity=".25"/>
    </svg>`;
  }

  private toolbar(cells: Cell[], i: number) {
    return html`<div class="bar" style=${styleMap({ width: `${toolbarWidths[i]}px` })}><span class="grip"></span>
      ${cells.map(([name, w, on]) => html`<div class=${classMap({ cell: true, on: !!on })} style=${styleMap({ width: `${w}px` })}>
        ${name === "combo"
          ? html`<div class="combo"><span>22%</span><svg width="9" height="9" viewBox="0 0 9 9"><path d="M2 3.500h5l-2.500 3z" fill="#5a7db8"/></svg></div>`
          : icon(name, name === "drop" ? 9 : name === "clock" ? 17 : name.startsWith("plus") ? 13 : 14)}</div>`)}</div>`;
  }

  private row(r: string[], i: number) {
    return html`<div class=${classMap({ tr: true, cur: i === 0 })}>
      <div class="sel">${i === 0 ? html`<svg width="6" height="8" viewBox="0 0 6 8"><path d="m1.500 1 2.500 3-2.500 3" stroke="#6a8fc8" stroke-width="1.300" fill="none"/></svg>` : ""}</div>
      <div class="lab"><svg width="24" height="14" viewBox="0 0 24 14"><path d="M4.500 0v14M5 7.500h6" stroke="#555" stroke-dasharray="2 1" fill="none"/><path d="m13 3.500 8 7.500M20.500 3l-7 8.500" stroke="#dd1c1c" stroke-width="1.800"/></svg>${r[0]}</div>
      ${r.slice(1).map((c, k) => html`<div class=${classMap({ d: true, num: k === 6 })}>${c}</div>`)}
    </div>`;
  }

  render() {
    return html`
      <div class="page">
        <div class="viewer">
          ${this.globe(16, 1)}
          <h1>You are viewing: Brian Bounds's Desktop</h1>
          <div class="wbtn"><svg width="11" height="12" viewBox="0 0 11 12"><path d="M2 9h5" stroke="#000" stroke-width="2"/></svg></div>
          <div class="wbtn"><svg width="11" height="12" viewBox="0 0 11 12"><path d="M3.500 4V2.200h6v4.500H7.500M1.500 5h6v4.500h-6z" stroke="#000" stroke-width="1.100" fill="none"/><path d="M3 2.300h7M1 5.200h7" stroke="#000" stroke-width="1.600"/></svg></div>
          <div class="wbtn last"><svg width="11" height="12" viewBox="0 0 11 12"><path d="m2 2.500 7 7M9 2.500l-7 7" stroke="#000" stroke-width="2"/></svg></div>
          <div class="edge-top"></div>
        </div>

        <div class="middle">
          <div class="app">
            <div class="title">
              <svg width="10" height="13" viewBox="0 0 10 13"><circle cx="3.500" cy="3.500" r="2.500" fill="#c22a5a"/><circle cx="6.500" cy="5" r="2.200" fill="#e8b22c"/><path d="M3 6c4 0 5 3 2 6" stroke="#8a1d4a" stroke-width="2.200" fill="none"/></svg>
              <span>VEH03848063_veh_pg.rel - Relavint Desktop</span>
              <div class="tb"><svg width="11" height="8" viewBox="0 0 11 8"><rect x="2" y="3" width="7.500" height="3.500" rx="1" fill="#f4f7fb" stroke="#56657c" stroke-width=".8"/></svg></div>
              <div class="tb"><svg width="12" height="9" viewBox="0 0 12 9"><path d="M4 1h6v4.500H4zM2 3h6v4.500H2z" fill="#f4f7fb" stroke="#56657c" stroke-width=".9"/></svg></div>
              <div class="tb x"><svg width="9" height="8" viewBox="0 0 9 8"><path d="m1.500 1 6 6m0-6-6 6" stroke="#5c2a22" stroke-width="2.600"/><path d="m1.500 1 6 6m0-6-6 6" stroke="#fff" stroke-width="1.600"/></svg></div>
            </div>
            <div class="menu"><span class="grip"></span>
              ${([["File", 24], ["Edit", 25], ["View", 28.5], ["Plug-In", 38], ["Window", 41], ["Help", 30]] as [string, number][]).map(([t, w]) => html`<span style=${styleMap({ width: `${w}px` })}><u>${t[0]}</u>${t.slice(1)}</span>`)}
            </div>
            <div class="bars">${toolbars.map((c, i) => this.toolbar(c, i))}</div>

            <div class="work">
              <section class="props">
                <div class="caption"><span>Properties</span>${captionIcons()}</div>
                <div class="prop-list">
                  ${properties.map(([k, v, cjk], i) => html`<div class=${classMap({ prop: true, hl: i < 8 })}><div class="k"><span>${k}</span></div><div class=${classMap({ v: true, cjk: !!cjk })}><span>${v}</span></div></div>`)}
                </div>
                <div class="side-tabs">
                  ${([["Search", 34], ["Properties", 48], ["Legend", 31], ["Action", 32]] as [string, number][]).map(([t, w], i) => html`<span class=${classMap({ on: i === 1 })} style=${styleMap({ width: `${w}px` })}>${t}</span>`)}
                </div>
              </section>

              <section class="center">
                <div class="canvas-area">
                  <svg class="canvas" width="1150" height="424" viewBox="155 81 1150 424">
                    <g transform="translate(820 80) scale(.33333)">${rightEdges.map(drawEdge)}${rightNodes.map(drawNode)}</g>
                    <g transform="translate(350 180) scale(.33333)">${leftEdges.map(drawEdge)}${leftNodes.map(drawNode)}
                      <path d="M277 892v36l9-8 7 15 6-3-6-14h11z" fill="#fff" stroke="#111" stroke-width="3"/></g>
                  </svg>
                  <svg width="16" height="424" viewBox="0 0 16 424"><path d="M7 5v419" stroke="#b4b6b4" stroke-width="2"/><path d="M2.500 396.500h7l2.500 3-2.500 3h-7z" fill="#f1f1ef" stroke="#80858c"/></svg>
                  <svg width="1150" height="15" viewBox="0 0 1150 15"><path d="M5 6h1140" stroke="#b4b6b4" stroke-width="1.600"/><path d="M478 1h5.500v8l-2.800 2.500L478 9z" fill="#f1f1ef" stroke="#80858c"/></svg>
                  <svg width="16" height="15" viewBox="0 0 16 15"><path d="M7 0v8" stroke="#b4b6b4" stroke-width="2"/></svg>
                </div>
                <div class="node-view">
                  <div class="caption"><span>Node View</span>${captionIcons()}</div>
                  <div class="node-body">
                    <div class="filter"><div class="box"></div><span>Show only selected?</span></div>
                    <div class="grid-side">
                      <div class="tabs">
                        ${([["Agency Report", 69], ["Person", 38], ["unknownperson", 71], ["Vehicle", 39], ["Document", 50]] as [string, number][]).map(([t, w], i) => html`<span class=${classMap({ on: i === 0 })} style=${styleMap({ width: `${w}px` })}>${t}</span>`)}
                      </div>
                      <div class="frame">
                        <div class="table">
                          <div class="tr head">
                            <div></div><div class="lab">Label<svg width="7" height="5" viewBox="0 0 7 5"><path d="M0 5 3.500 0 7 5z" fill="#a9c4ea"/></svg></div>
                            ${columns.slice(1).map((c, k) => html`<div class=${classMap({ num: k === 6 })}>${c}</div>`)}
                          </div>
                          ${rows.map((r, i) => this.row(r, i))}
                          <div class="tr"><div class="sel"></div>${columns.map(() => html`<div></div>`)}</div>
                        </div>
                        <div class="scroll">
                          <div class="up"><svg width="8" height="5" viewBox="0 0 8 5"><path d="M0 5 4 0l4 5z" fill="#444a58"/></svg></div>
                          <div class="thumb"><svg width="6" height="7" viewBox="0 0 6 7"><path d="M0 .5h6M0 2.500h6M0 4.500h6M0 6.500h6" stroke="#5e7190" stroke-width=".8"/></svg></div>
                          <div class="down"><svg width="8" height="5" viewBox="0 0 8 5"><path d="m0 0 4 5 4-5z" fill="#444a58"/></svg></div>
                        </div>
                      </div>
                    </div>
                  </div>
                </div>
              </section>

              <section class="palette">
                <div class="caption"><span>Palette</span>${captionIcons()}</div>
                <div class="cat">Relavint</div>
                <div class="items">
                  ${paletteItems.map(([p, t, flat]) => html`<div class=${classMap({ item: true, flat: !!flat })}><svg width="52" height="38" viewBox="0 0 52 38">${pictures[p]}</svg><span>${t}</span></div>`)}
                </div>
                <div class="more up"><svg width="7" height="5" viewBox="0 0 7 5"><path d="M0 4.500 3.500.5 7 4.500z" fill="#12357e"/></svg></div>
                <div class="more dn"><svg width="7" height="5" viewBox="0 0 7 5"><path d="M0 .5h7l-3.500 4z" fill="#12357e"/></svg></div>
              </section>
            </div>
            <div class="status"></div>
          </div>
          <div class="desk"></div>
          <div class="edge"><div class="e1"></div><div class="e2"></div>
            <div class="e3"><svg width="8" height="54" viewBox="0 0 8 54"><path d="M6 3v48" stroke="#4466aa" stroke-dasharray="5 3"/><path d="M4 1.500h4v4H4zM4 24.500h4v4H4zM4 45.500h4v4H4z" fill="#fff" stroke="#555"/></svg></div>
            <div class="e4"></div></div>
        </div>

        <div class="taskbar">
          ${this.task(53, 0)}${this.task(60, 0, "#f0e08a", 9)}${this.task(47, 0)}${this.task(47, 53, "#e8b44a", 24)}${this.task(49, 2)}${this.task(48, 2)}${this.task(48, 2)}${this.task(46, 3, "#4cb8c8", 12, true)}${this.task(48, 3)}
          <div class="sp"></div>${this.task(183, 0, "", 0, false, true)}
        </div>
      </div>

      <div class="overlay">
        <div class="plate"></div>
        <div class="tab-green"><div>Viewing Brian Bounds's desktop
          <svg width="10" height="10" viewBox="0 0 10 10"><circle cx="5" cy="5" r="4.300" fill="#d9261c" stroke="#7e4a20" stroke-width=".8"/><ellipse cx="5" cy="3" rx="2.500" ry="1.500" fill="#ffb0a0"/></svg></div></div>
      </div>
      <div class="globe">${this.globe(50, 0.7)}</div>
    `;
  }
}
